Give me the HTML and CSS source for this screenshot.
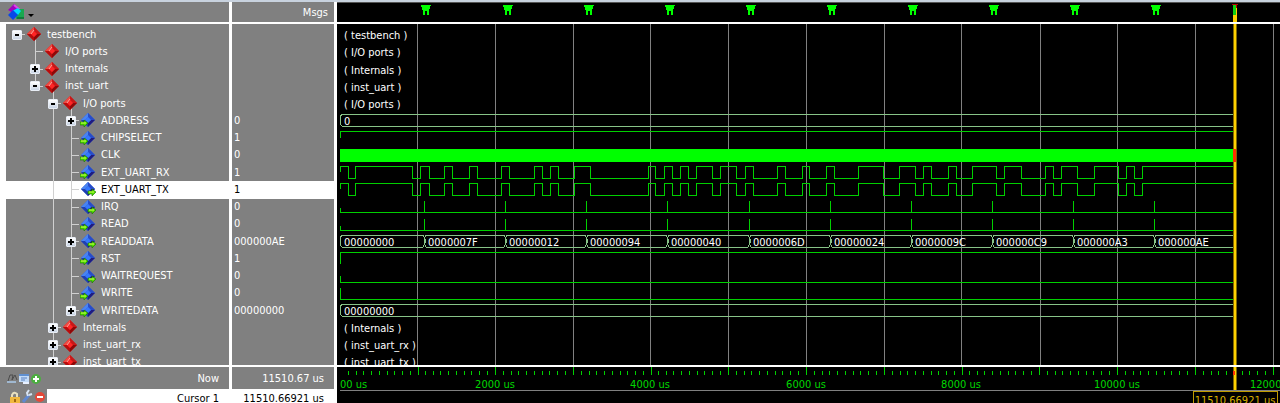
FILE: index.html
```html
<!DOCTYPE html>
<html lang="en">
<head>
<meta charset="utf-8">
<title>Wave - testbench</title>
<link rel="stylesheet" href="styles.css">
</head>
<body>
<div class="window">
  <header class="row header">
    <div class="names-col">
      <button class="tool" aria-label="Signal display options">
        <svg width="28" height="18" viewBox="0 0 28 18"><path d="M1 6L7 0L13 6L8 10Z" fill="#a000c0"/><path d="M7 1L13 6" stroke="#e040f0" stroke-width="2"/><path d="M9 5H17V15H9Z" fill="#18a850"/><path d="M5 7L11 4L14 7L11 11Z" fill="#00d8ff"/><path d="M1 11L6 6L11 11L6 16Z" fill="#0848e8"/><path d="M10 14H17" stroke="#085028"/><path d="M21 10H27L24 13Z" fill="#000"/></svg>
      </button>
    </div>
    <div class="values-col heading">Msgs</div>
    <div class="waves-col">
      <svg class="plot" width="943" height="20" viewBox="337 2 943 20" aria-hidden="true">
        <defs><path id="mark" d="M-5 5H5L4 8L3 11V15H1V11H-1V15H-3V11L-4 8Z" fill="#00ff00"/></defs>
        <path d="M337 2H1280" stroke="#555"/>
        <use href="#mark" x="426"/><use href="#mark" x="508"/><use href="#mark" x="589"/><use href="#mark" x="670"/><use href="#mark" x="751"/><use href="#mark" x="832"/><use href="#mark" x="913"/><use href="#mark" x="994"/><use href="#mark" x="1075"/><use href="#mark" x="1156"/>
        <rect x="1233" y="4" width="4" height="18" fill="#ffd000"/><path d="M1232 4H1238L1236 9H1234Z" fill="#b80000"/><path d="M1233 5H1236V15H1233Z" fill="#10d010"/>
      </svg>
    </div>
  </header>

  <main class="row body">
    <div class="names-col gutter">
      <svg class="defs" aria-hidden="true">
        <defs>
          <g id="red"><path d="M8 0L15 7L8 14L1 7Z" fill="#d91414"/><path d="M8 0L1 7H5L8 4Z" fill="#f04a42"/><path d="M8 0L15 7H11L8 4Z" fill="#c81818"/><path d="M1 7L8 14V10L5 7Z" fill="#b80c0c"/><path d="M15 7L8 14V10L11 7Z" fill="#8e0808"/><path d="M8 4L5 7L8 10L11 7Z" fill="#ff2525"/><path d="M8 3L5 7" stroke="#ffa098"/></g>
          <g id="blue"><path d="M8 0L15 7L8 14L1 7Z" fill="#2858dc"/><path d="M8 0L1 7H5L8 4Z" fill="#4a84f0"/><path d="M8 0L15 7H11L8 4Z" fill="#284cc8"/><path d="M1 7L8 14V10L5 7Z" fill="#2040b0"/><path d="M15 7L8 14V10L11 7Z" fill="#201c80"/><path d="M8 4L5 7L8 10L11 7Z" fill="#3478ff"/></g>
          <path id="arrow" d="M0 9H4V7L8 10L4 14V12H0Z" fill="#50e000" stroke="#187000" stroke-width=".6"/>
          <g id="in"><use href="#blue"/><use href="#arrow"/><path d="M1 10H6" stroke="#d0ff50"/></g>
          <g id="out"><use href="#blue"/><use href="#arrow" x="8"/><path d="M9 10H14" stroke="#d0ff50"/></g>
        </defs>
      </svg>
      <ul class="list tree">
        <li><button class="cell toggle first" aria-label="Collapse"><b class="box minus"></b></button><i class="cell stem"><svg class="ic"><use href="#red"/></svg></i><span class="label">testbench</span></li>
        <li><i class="cell"></i><i class="cell tee"></i><i class="cell"><svg class="ic"><use href="#red"/></svg></i><span class="label">I/O ports</span></li>
        <li><i class="cell"></i><button class="cell tee toggle" aria-label="Expand"><b class="box plus"></b></button><i class="cell"><svg class="ic"><use href="#red"/></svg></i><span class="label">Internals</span></li>
        <li><i class="cell"></i><button class="cell corner toggle" aria-label="Collapse"><b class="box minus"></b></button><i class="cell stem"><svg class="ic"><use href="#red"/></svg></i><span class="label">inst_uart</span></li>
        <li><i class="cell"></i><i class="cell"></i><button class="cell tee toggle" aria-label="Collapse"><b class="box minus"></b></button><i class="cell stem"><svg class="ic"><use href="#red"/></svg></i><span class="label">I/O ports</span></li>
        <li><i class="cell"></i><i class="cell"></i><i class="cell guide"></i><button class="cell tee toggle" aria-label="Expand"><b class="box plus"></b></button><i class="cell"><svg class="ic"><use href="#in"/></svg></i><span class="label">ADDRESS</span></li>
        <li><i class="cell"></i><i class="cell"></i><i class="cell guide"></i><i class="cell tee"></i><i class="cell"><svg class="ic"><use href="#in"/></svg></i><span class="label">CHIPSELECT</span></li>
        <li><i class="cell"></i><i class="cell"></i><i class="cell guide"></i><i class="cell tee"></i><i class="cell"><svg class="ic"><use href="#in"/></svg></i><span class="label">CLK</span></li>
        <li><i class="cell"></i><i class="cell"></i><i class="cell guide"></i><i class="cell tee"></i><i class="cell"><svg class="ic"><use href="#in"/></svg></i><span class="label">EXT_UART_RX</span></li>
        <li class="selected"><i class="cell"></i><i class="cell"></i><i class="cell guide"></i><i class="cell tee"></i><i class="cell"><svg class="ic"><use href="#out"/></svg></i><span class="label">EXT_UART_TX</span></li>
        <li><i class="cell"></i><i class="cell"></i><i class="cell guide"></i><i class="cell tee"></i><i class="cell"><svg class="ic"><use href="#out"/></svg></i><span class="label">IRQ</span></li>
        <li><i class="cell"></i><i class="cell"></i><i class="cell guide"></i><i class="cell tee"></i><i class="cell"><svg class="ic"><use href="#in"/></svg></i><span class="label">READ</span></li>
        <li><i class="cell"></i><i class="cell"></i><i class="cell guide"></i><button class="cell tee toggle" aria-label="Expand"><b class="box plus"></b></button><i class="cell"><svg class="ic"><use href="#out"/></svg></i><span class="label">READDATA</span></li>
        <li><i class="cell"></i><i class="cell"></i><i class="cell guide"></i><i class="cell tee"></i><i class="cell"><svg class="ic"><use href="#in"/></svg></i><span class="label">RST</span></li>
        <li><i class="cell"></i><i class="cell"></i><i class="cell guide"></i><i class="cell tee"></i><i class="cell"><svg class="ic"><use href="#out"/></svg></i><span class="label">WAITREQUEST</span></li>
        <li><i class="cell"></i><i class="cell"></i><i class="cell guide"></i><i class="cell tee"></i><i class="cell"><svg class="ic"><use href="#in"/></svg></i><span class="label">WRITE</span></li>
        <li><i class="cell"></i><i class="cell"></i><i class="cell guide"></i><button class="cell corner toggle" aria-label="Expand"><b class="box plus"></b></button><i class="cell"><svg class="ic"><use href="#in"/></svg></i><span class="label">WRITEDATA</span></li>
        <li><i class="cell"></i><i class="cell"></i><button class="cell tee toggle" aria-label="Expand"><b class="box plus"></b></button><i class="cell"><svg class="ic"><use href="#red"/></svg></i><span class="label">Internals</span></li>
        <li><i class="cell"></i><i class="cell"></i><button class="cell tee toggle" aria-label="Expand"><b class="box plus"></b></button><i class="cell"><svg class="ic"><use href="#red"/></svg></i><span class="label">inst_uart_rx</span></li>
        <li><i class="cell"></i><i class="cell"></i><button class="cell tee toggle" aria-label="Expand"><b class="box plus"></b></button><i class="cell"><svg class="ic"><use href="#red"/></svg></i><span class="label">inst_uart_tx</span></li>
      </ul>
    </div>
    <div class="values-col">
      <ul class="list values">
        <li></li><li></li><li></li><li></li><li></li>
        <li>0</li><li>1</li><li>0</li><li>1</li><li class="selected">1</li><li>0</li><li>0</li><li>000000AE</li><li>1</li><li>0</li><li>0</li><li>00000000</li>
        <li></li><li></li><li></li>
      </ul>
    </div>
    <div class="waves-col">
      <svg class="plot" width="943" height="346" viewBox="337 24 943 346" role="img" aria-label="Signal waveforms">
        <path class="grid" d="M417 24V370M495 24V370M573 24V370M650 24V370M728 24V370M806 24V370M884 24V370M961 24V370M1040 24V370M1117 24V370M1195 24V370M1273 24V370"/>
        <defs>
          <path id="serial" d="M340 172V167L341 166H348V178H355V166H412V178H420V166H429V178H444V166H452V178H469V166H477V178H501V166H509V178H534V166H542V178H550V166H558V178H574V166H590V178H648V166H655V178H664V166H672V178H680V166H688V178H696V166H712V178H720V166H736V178H745V166H753V178H777V166H785V178H802V166H809V178H826V166H834V178H858V166H883V178H899V166H915V178H923V166H931V178H948V166H956V178H972V166H996V178H1004V166H1021V178H1045V166H1053V178H1061V166H1077V178H1094V166H1118V178H1126V166H1134V178H1142V166H1234"/>
          <path id="pulses" d="M340 208V212H1234M424 201V212M505 201V212M586 201V212M667 201V212M749 201V212M830 201V212M911 201V212M992 201V212M1073 201V212M1154 201V212"/>
          <path id="bus" d="M1234 114H342L340 117V124L342 126H1234"/>
        </defs>
        <g class="bus">
          <use href="#bus"/><use href="#bus" y="190"/>
          <path d="M423 235H342L340 238V245L342 247H423L425 243V239ZM504 235H426L424 239V243L426 247H504L506 243V239ZM585 235H507L505 239V243L507 247H585L587 243V239ZM666 235H588L586 239V243L588 247H666L668 243V239ZM748 235H669L667 239V243L669 247H748L750 243V239ZM829 235H751L749 239V243L751 247H829L831 243V239ZM910 235H832L830 239V243L832 247H910L912 243V239ZM991 235H913L911 239V243L913 247H991L993 243V239ZM1072 235H994L992 239V243L994 247H1072L1074 243V239ZM1153 235H1075L1073 239V243L1075 247H1153L1155 243V239ZM1234 235H1156L1154 239V243L1156 247H1234"/>
        </g>
        <g class="wave">
          <path d="M340 138V132L341 131H1234M340 264V253L341 252H1234M340 276V282H1234M340 288V299H1234"/>
          <use href="#serial"/><use href="#serial" y="17"/>
          <use href="#pulses"/><use href="#pulses" y="18"/>
        </g>
        <rect x="340" y="149" width="894" height="13" fill="#00ff00"/>
        <g class="text">
          <text x="344" y="39">( testbench )</text><text x="344" y="56">( I/O ports )</text><text x="344" y="74">( Internals )</text><text x="344" y="91">( inst_uart )</text><text x="344" y="108">( I/O ports )</text>
          <text x="344" y="125">0</text>
          <text x="344" y="246">00000000</text><text x="428" y="246">0000007F</text><text x="509" y="246">00000012</text><text x="590" y="246">00000094</text><text x="671" y="246">00000040</text><text x="753" y="246">0000006D</text><text x="834" y="246">00000024</text><text x="915" y="246">0000009C</text><text x="996" y="246">000000C9</text><text x="1077" y="246">000000A3</text><text x="1158" y="246">000000AE</text>
          <text x="344" y="315">00000000</text>
          <text x="344" y="332">( Internals )</text><text x="344" y="349">( inst_uart_rx )</text><text x="344" y="366">( inst_uart_tx )</text>
        </g>
        <rect x="1233" y="24" width="4" height="346" fill="#806800"/><rect x="1234" y="24" width="2" height="346" fill="#ffd000"/><rect x="1233" y="149" width="3" height="13" fill="#ff3000"/>
      </svg>
    </div>
  </main>

  <footer class="row footer">
    <div class="names-col">
      <div class="info"><svg width="36" height="14" viewBox="0 0 36 14" aria-hidden="true"><path d="M1 9L3 3H6L5 8L8 3L10 8" stroke="#4c4c4c" fill="none"/><path d="M0 9H9V11H0Z" fill="#a0b8d0"/><path d="M12 2H22V10H12Z" fill="#c4dcf8"/><path d="M12 2H22V4H12Z" fill="#6090d0"/><path d="M14 6H20M14 8H18" stroke="#5880c0"/><path d="M16 10H22V12H16Z" fill="#e8f0ff"/><circle cx="29" cy="7" r="5" fill="#4cae40"/><path d="M26 7H32M29 4V10" stroke="#fff" stroke-width="2"/></svg><span>Now</span></div>
      <div class="info cursor"><div class="tools"><svg width="38" height="14" viewBox="0 0 38 14" aria-hidden="true"><path d="M4 9V6Q6 2 9 5V9" stroke="#e8e0c0" stroke-width="2" fill="none"/><path d="M2 8H12V14H2Z" fill="#f0b840"/><path d="M6 10H8V13H6Z" fill="#a06810"/><path d="M15 13L21 6" stroke="#6088d0" stroke-width="3"/><path d="M20 7L19 4L21 1M21 6L24 5" stroke="#d8e4f4" stroke-width="2" fill="none"/><circle cx="32" cy="8" r="5" fill="#e44838"/><path d="M29 8H35" stroke="#fff" stroke-width="2"/></svg></div><span>Cursor 1</span></div>
    </div>
    <div class="values-col">
      <div class="info">11510.67 us</div>
      <div class="info cursor">11510.66921 us</div>
    </div>
    <div class="waves-col">
      <svg class="plot" width="943" height="36" viewBox="337 367 943 36" role="img" aria-label="Time ruler">
        <defs><path id="ticks" d="M8 371V375M16 371V375M23 371V375M31 371V375M39 371V375M47 371V375M54 371V375M62 371V375M70 371V375M78 367V375"/></defs>
        <g class="ticks"><use href="#ticks" x="340"/><use href="#ticks" x="417"/><use href="#ticks" x="495"/><use href="#ticks" x="573"/><use href="#ticks" x="650"/><use href="#ticks" x="728"/><use href="#ticks" x="806"/><use href="#ticks" x="884"/><use href="#ticks" x="961"/><use href="#ticks" x="1039"/><use href="#ticks" x="1117"/><use href="#ticks" x="1195"/></g>
        <path class="grid" d="M340 390H1280"/>
        <g class="time"><text class="start" x="340" y="388">00 us</text><text x="495" y="388">2000 us</text><text x="650" y="388">4000 us</text><text x="806" y="388">6000 us</text><text x="961" y="388">8000 us</text><text x="1117" y="388">10000 us</text><text x="1273" y="388">12000 us</text></g>
        <rect x="1233" y="367" width="4" height="23" fill="#806800"/><rect x="1234" y="367" width="2" height="23" fill="#ffd000"/><rect x="1233" y="371" width="2" height="4" fill="#ff3000"/>
        <path class="flag" d="M1193 404V391H1277V404"/><text class="flag-text" x="1235" y="404">11510.66921 us</text>
      </svg>
    </div>
  </footer>
</div>
</body>
</html>
```
FILE: styles.css
```css
* { box-sizing: border-box; }
body { margin: 0; background: #fff; color: #fff; font: 11px/14px "DejaVu Sans Condensed", "Noto Sans", sans-serif; }
.window { display: flex; flex-direction: column; height: 100vh; overflow: hidden; border-top: 2px solid #c8d2de; }
.row { display: grid; grid-template-columns: 229px 105px 1fr; column-gap: 0; }
.names-col, .values-col { background: #808080; overflow: hidden; min-width: 0; }
.values-col { border-left: 3px solid #fff; }
.waves-col { background: #000; border-left: 3px solid #fff; overflow: hidden; min-width: 0; }
.plot { display: block; shape-rendering: crispEdges; }
.header { height: 20px; flex: none; }
.heading { text-align: right; padding: 4px 6px 0 0; }
.tool { display: flex; margin: 0; padding: 2px 0 0 7px; border: 0; background: none; }
.body { flex: 1; min-height: 0; border-top: 2px solid #fff; border-bottom: 2px solid #fff; grid-template-rows: 100%; }
.gutter { border-left: 6px solid #fff; }
.defs { display: block; width: 0; height: 0; }
.list { display: grid; grid-template-rows: repeat(20, 1fr); height: 347px; margin: 0; padding: 2px 0 0; list-style: none; }
.list li { display: flex; align-items: center; min-height: 0; white-space: nowrap; }
.tree li { padding-left: 1px; }
.values li { padding-left: 2px; }
.list .selected { background: #fff; color: #000; }
.cell { --line: #d0d0d0; flex: none; display: flex; align-items: center; justify-content: center; width: 18px; height: 100%; margin: 0; padding: 0; border: 0; background: none no-repeat; }
.guide { background: linear-gradient(var(--line), var(--line)) 10px 0 / 1px 100% no-repeat; }
.tee { background: linear-gradient(var(--line), var(--line)) 10px 0 / 1px 100% no-repeat, linear-gradient(var(--line), var(--line)) 10px 50% / 8px 1px no-repeat; }
.corner { background: linear-gradient(var(--line), var(--line)) 10px 0 / 1px 50% no-repeat, linear-gradient(var(--line), var(--line)) 10px 50% / 8px 1px no-repeat; }
.first { background: linear-gradient(var(--line), var(--line)) 10px 50% / 8px 1px no-repeat; }
.stem { background: linear-gradient(var(--line), var(--line)) 10px 100% / 1px 50% no-repeat; }
.toggle { padding-left: 2px; }
.box { width: 10px; height: 10px; border: 1px solid #e8edf5; border-radius: 1px; background: linear-gradient(#000, #000) center / 4px 2px no-repeat, linear-gradient(#fff, #c9d4e4); }
.plus { background: linear-gradient(#000, #000) center / 6px 2px no-repeat, linear-gradient(#000, #000) center / 2px 6px no-repeat, linear-gradient(#fff, #c9d4e4); }
.ic { display: block; width: 16px; height: 15px; }
.label { padding-left: 4px; }
.footer { flex: none; height: 36px; }
.footer .names-col, .footer .values-col { display: grid; grid-template-rows: 22px 14px; }
.info { display: flex; align-items: center; justify-content: space-between; padding: 2px 10px 0 7px; }
.values-col .info { justify-content: flex-end; }
.cursor { align-items: flex-start; padding: 0 10px 0 0; background: #fff; color: #000; }
.names-col .cursor span, .values-col .cursor { padding-top: 3px; }
.tools { width: 47px; height: 100%; padding-left: 8px; background: #808080; }
.grid { fill: none; stroke: #808080; stroke-width: 1px; }
.wave { fill: none; stroke: #00d000; stroke-width: 1px; }
.bus { fill: none; stroke: #88c488; stroke-width: 1px; }
.text { fill: #fff; }
.ticks { stroke: #00d000; stroke-width: 1px; }
.time { fill: #00d800; text-anchor: middle; }
.time .start { text-anchor: start; }
.flag { fill: #000; stroke: #c09c00; stroke-width: 1px; }
.flag-text { fill: #d8b000; text-anchor: middle; }
```
